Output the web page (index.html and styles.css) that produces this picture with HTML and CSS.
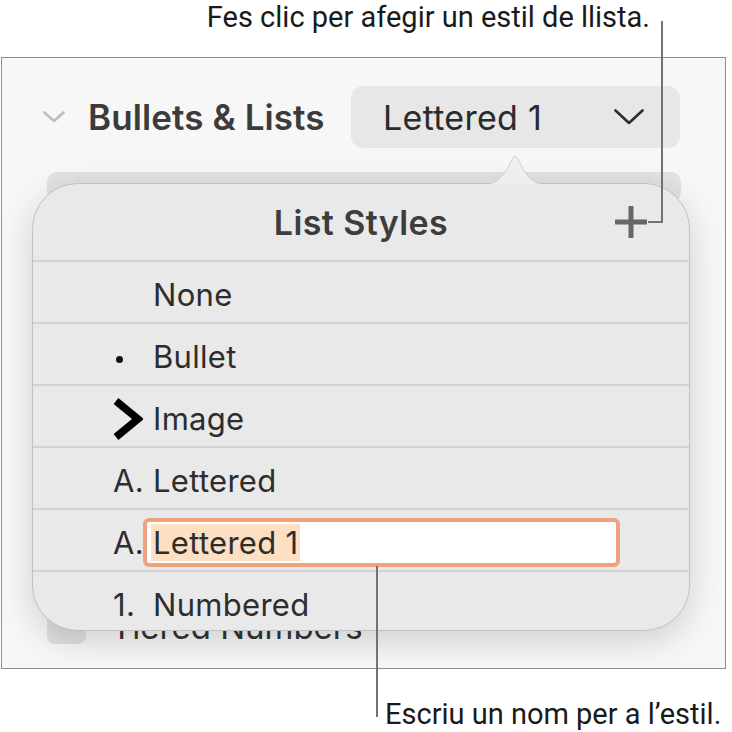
FILE: index.html
```html
<!DOCTYPE html>
<html lang="ca">
<head>
    <meta charset="UTF-8">
    <meta name="viewport" content="width=device-width, initial-scale=1.0">
    <title>List Styles</title>
    <link rel="stylesheet" href="styles.css">
</head>
<body>
    <div class="note note-top">Fes clic per afegir un estil de llista.</div>

    <div class="frame">
        <div class="section-head">
            <svg class="disclosure" width="22" height="12" viewBox="0 0 22 12">
                <polyline points="1.5,1.5 11,10 20.5,1.5" fill="none" stroke="#bdbdbd" stroke-width="2.6" stroke-linecap="round" stroke-linejoin="round"/>
            </svg>
            <span class="section-title">Bullets &amp; Lists</span>
            <div class="dropdown">
                <span>Lettered 1</span>
                <svg width="30" height="16" viewBox="0 0 30 16">
                    <polyline points="1.5,1.5 15,14 28.5,1.5" fill="none" stroke="#2e2e2e" stroke-width="2.6" stroke-linecap="round" stroke-linejoin="round"/>
                </svg>
            </div>
        </div>

        <div class="style-box"></div>
        <div class="behind-row">
            <div class="behind-swatch"></div>
            <span>Tiered Numbers</span>
        </div>

        <div class="popover">
            <svg class="popover-arrow" width="74" height="30" viewBox="0 0 74 30">
                <path d="M0 30 C15 30 21 27 29 14 C33 7 34.5 1.5 37 1.5 C39.5 1.5 41 7 45 14 C53 27 59 30 74 30 Z" fill="#efefef" stroke="#cfcfcf" stroke-width="1"/>
                <rect x="0" y="29" width="74" height="2" fill="#ececec"/>
            </svg>
            <div class="popover-head">
                <span></span>
                <span class="popover-title">List Styles</span>
                <svg class="plus" width="32" height="32" viewBox="0 0 32 32">
                    <line x1="16" y1="1" x2="16" y2="31" stroke="#676767" stroke-width="5" stroke-linecap="round"/>
                    <line x1="1" y1="16" x2="31" y2="16" stroke="#676767" stroke-width="5" stroke-linecap="round"/>
                </svg>
            </div>
            <div class="row">
                <span class="mark"></span>
                <span>None</span>
            </div>
            <div class="row">
                <span class="mark"><span class="dot"></span></span>
                <span>Bullet</span>
            </div>
            <div class="row">
                <span class="mark">
                    <svg width="30" height="42" viewBox="0 0 30 42">
                        <polyline points="3,3 25,21 3,39" fill="none" stroke="#000" stroke-width="7.5" stroke-linejoin="miter"/>
                    </svg>
                </span>
                <span>Image</span>
            </div>
            <div class="row">
                <span class="mark">A.</span>
                <span>Lettered</span>
            </div>
            <div class="row">
                <span class="mark">A.</span>
                <div class="name-field"><span class="selected">Lettered 1</span></div>
            </div>
            <div class="row">
                <span class="mark">1.</span>
                <span>Numbered</span>
            </div>
        </div>
    </div>

    <div class="note note-bottom">Escriu un nom per a l’estil.</div>

    <div class="leader leader-top"></div>
    <div class="leader leader-top-tick"></div>
    <div class="leader leader-bottom"></div>
</body>
</html>
```

FILE: styles.css
```css
body {
    margin: 0;
    width: 732px;
    height: 732px;
    overflow: hidden;
    position: relative;
    background: #fff;
    font-family: Inter, "Noto Sans", sans-serif;
    color: #2d2d2d;
}
.note {
    font-family: Roboto, "Liberation Sans", sans-serif;
    font-size: 29px;
    color: #1a1a1a;
    white-space: nowrap;
}
.note-top {
    height: 57px;
    padding: 1px 82px 0 0;
    line-height: 32px;
    text-align: right;
    box-sizing: border-box;
}
.note-bottom {
    line-height: 30px;
    padding: 30px 0 0 385px;
}
.frame {
    position: relative;
    width: 723px;
    height: 610px;
    margin-left: 1px;
    border: 1px solid #8e8e8e;
    background: #f7f7f7;
}
.section-head {
    display: flex;
    align-items: center;
    height: 62px;
    margin-top: 28px;
    padding: 0 45px 0 41px;
}
.disclosure {
    margin-right: 23px;
}
.section-title {
    font-size: 35px;
    font-weight: 600;
    color: #3b3b3b;
    letter-spacing: 0.1px;
}
.dropdown {
    margin-left: auto;
    width: 329px;
    height: 62px;
    box-sizing: border-box;
    display: flex;
    align-items: center;
    justify-content: space-between;
    padding: 0 36px 0 32px;
    background: #e7e7e7;
    border-radius: 12px;
    font-size: 34px;
    letter-spacing: 0.3px;
    color: #2b2b2b;
}
.style-box {
    height: 30px;
    margin: 24px 44px 0 45px;
    background: #e2e2e2;
    border-radius: 10px;
}
.behind-row {
    display: flex;
    align-items: center;
    height: 34px;
    margin-top: 408px;
    padding-left: 45px;
    font-size: 33px;
    color: #333;
}
.behind-swatch {
    width: 39px;
    height: 34px;
    margin-right: 25px;
    background: #e0e0e0;
    border-radius: 8px;
}
.popover {
    position: absolute;
    left: 30px;
    top: 125px;
    width: 656px;
    height: 446px;
    border: 1px solid #c2c2c2;
    border-radius: 46px;
    background: #e9e9e9;
    box-shadow: 0 10px 34px rgba(0, 0, 0, 0.16);
}
.popover-arrow {
    position: absolute;
    left: 445px;
    top: -29px;
}
.popover-head {
    display: grid;
    grid-template-columns: 1fr auto 1fr;
    align-items: center;
    height: 76px;
}
.popover-title {
    font-size: 34px;
    font-weight: 600;
    color: #3d3d3d;
    letter-spacing: 0.4px;
}
.plus {
    justify-self: end;
    margin-right: 42px;
}
.row {
    display: flex;
    align-items: center;
    height: 62px;
    padding: 5px 0 0 80px;
    box-sizing: border-box;
    border-top: 2px solid #d3d3d3;
    font-size: 31px;
    letter-spacing: 0.3px;
    color: #2d2d2d;
}
.mark {
    width: 40px;
    display: flex;
    align-items: center;
}
.dot {
    width: 7px;
    height: 7px;
    margin: 6px 0 0 3px;
    border-radius: 50%;
    background: #111;
}
.name-field {
    margin-left: -10px;
    width: 477px;
    height: 49px;
    box-sizing: border-box;
    display: flex;
    align-items: center;
    padding: 0 4px;
    border: 4px solid #eea27f;
    border-radius: 6px;
    background: #fff;
}
.selected {
    display: inline-block;
    height: 37px;
    line-height: 37px;
    padding: 0 2px;
    background: #fddfc1;
}
.leader {
    position: absolute;
    background: #727272;
}
.leader-top {
    left: 661px;
    top: 21px;
    width: 2px;
    height: 202px;
}
.leader-top-tick {
    left: 648px;
    top: 221px;
    width: 14px;
    height: 2px;
}
.leader-bottom {
    left: 376px;
    top: 566px;
    width: 2px;
    height: 151px;
}
```
